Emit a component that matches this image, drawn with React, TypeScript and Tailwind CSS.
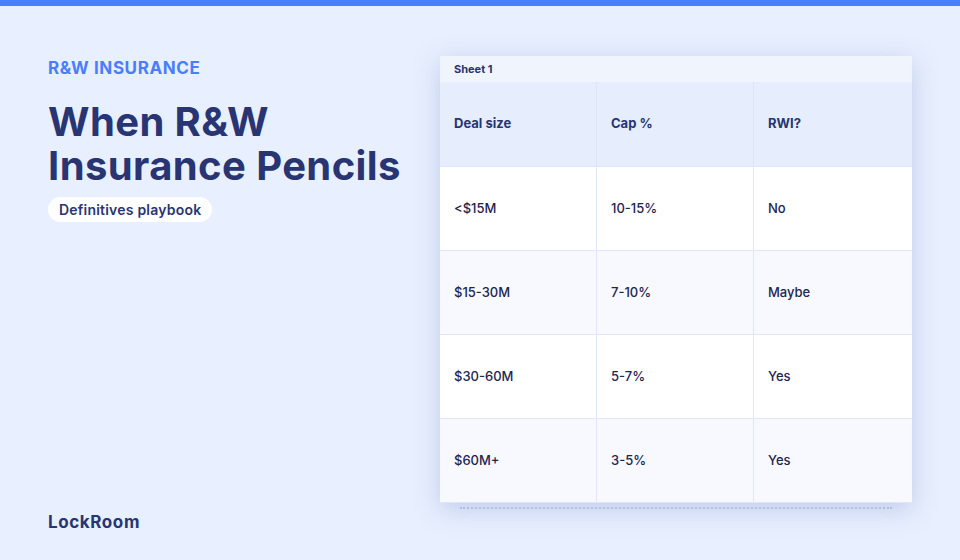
import React from "react";

const rows = [
  ["<$15M", "10-15%", "No"],
  ["$15-30M", "7-10%", "Maybe"],
  ["$30-60M", "5-7%", "Yes"],
  ["$60M+", "3-5%", "Yes"],
];

export default function App() {
  return (
    <div
      className="w-[960px] h-[560px] bg-[#e8effe] flex flex-col overflow-hidden"
      style={{ fontFamily: "Inter, 'Noto Sans', sans-serif" }}
    >
      <div className="h-[6px] bg-[#4a7dff] shrink-0" />
      <div className="flex flex-1">
        <div className="w-[440px] shrink-0 pl-[48px] pt-[52px] pb-[28px] flex flex-col">
          <div className="text-[17px] leading-[20px] font-bold text-[#4a7dff] tracking-[0.035em]">
            R&amp;W INSURANCE
          </div>
          <h1 className="mt-[22px] text-[40px] leading-[44px] font-bold text-[#283572] tracking-[0.01em]">
            When R&amp;W
            <br />
            Insurance Pencils
          </h1>
          <div className="mt-[9px]">
            <span className="inline-block bg-white rounded-full px-[11px] py-[3px] text-[14px] leading-[19px] font-semibold text-[#283572] tracking-[0.015em]">
              Definitives playbook
            </span>
          </div>
          <div className="mt-auto text-[17px] leading-[20px] font-bold text-[#283572] tracking-[0.035em]">
            LockRoom
          </div>
        </div>
        <div className="pt-[50px]">
          <div className="w-[472px] bg-white shadow-[0_6px_24px_rgba(140,160,210,0.45)]">
            <div className="h-[26px] bg-[#f0f4fd] px-[14px] flex items-center text-[11px] font-bold text-[#283572]">
              Sheet 1
            </div>
            <div className="grid grid-cols-[157px_157px_158px] h-[84px] bg-[#e6eefd]">
              {["Deal size", "Cap %", "RWI?"].map((h, i) => (
                <div
                  key={h}
                  className={`flex items-center px-[14px] text-[13px] font-bold text-[#283572] ${i < 2 ? "border-r border-[#dde5f6]" : ""}`}
                >
                  {h}
                </div>
              ))}
            </div>
            {rows.map((r, ri) => (
              <div
                key={ri}
                className={`grid grid-cols-[157px_157px_158px] h-[84px] border-t border-[#dfe6f5] ${ri % 2 === 0 ? "bg-white" : "bg-[#f7f9fe]"}`}
              >
                {r.map((c, ci) => (
                  <div
                    key={ci}
                    className={`flex items-center px-[14px] text-[13px] font-medium text-[#1e2550] ${ci < 2 ? "border-r border-[#dfe6f5]" : ""}`}
                  >
                    {c}
                  </div>
                ))}
              </div>
            ))}
            <div className="h-[1px] bg-[#dfe6f5]" />
          </div>
          <div className="mx-[20px] mt-[4px] border-t-2 border-dotted border-[#b5bedb] w-[432px]" />
        </div>
      </div>
    </div>
  );
}
